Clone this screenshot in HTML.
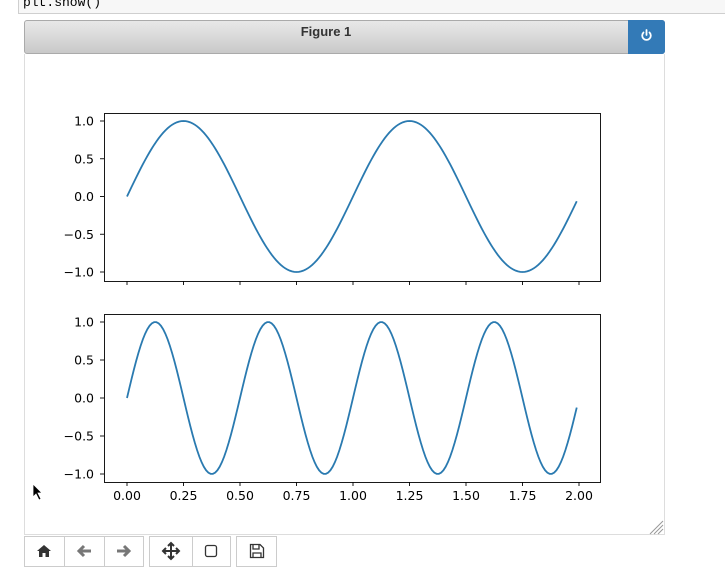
<!DOCTYPE html>
<html><head><style>
body{margin:0;width:725px;height:577px;background:#fff;overflow:hidden;position:relative;font-family:"Liberation Sans",sans-serif}
.code{position:absolute;left:18px;top:-2px;width:720px;height:14px;background:#f7f7f7;border:1px solid #cfcfcf;font-family:"Liberation Mono",monospace;font-size:13px;line-height:8px;padding-left:4px;color:#000;overflow:hidden}
.hdr{position:absolute;left:24px;top:20px;width:639px;height:32px;border:1px solid #aaa;border-radius:3px;background:linear-gradient(#e8e8e8,#c9c9c9);font-weight:bold;font-size:13px;line-height:22px;color:#333}
.ttl{position:absolute;left:0;width:602px;text-align:center;top:0}
.pw{position:absolute;right:-1px;top:-1px;width:37px;height:34px;background:#337ab7;border-radius:0 3px 3px 0}
.canvas{position:absolute;left:24px;top:54px;width:639px;height:480px;border:1px solid #ddd;border-top:none}
.btn{position:absolute;top:536px;height:31px;border:1px solid #ccc;background:#fff;box-sizing:border-box}
</style></head><body>
<div class="code">plt.show()</div>
<div class="hdr"><div class="ttl">Figure 1</div><div class="pw"><svg width="37" height="34" viewBox="0 0 37 34"><path d="M15.5 12.5a4.3 4.3 0 1 0 6 0" fill="none" stroke="#fff" stroke-width="1.8" stroke-linecap="round"/><line x1="18.5" y1="10" x2="18.5" y2="15" stroke="#fff" stroke-width="1.8" stroke-linecap="round"/></svg></div></div>
<div class="canvas"></div>
<svg style="position:absolute;left:0;top:0" width="725" height="577" font-family="DejaVu Sans, sans-serif" font-size="12.5">
<g id="g" stroke="#000" stroke-width="0.9" fill="none"></g>
<g id="t" fill="#000" stroke="none"></g>
<path d="M650 534 L663 521 M654 534 L663 525 M658 534 L663 529" stroke="#999" stroke-width="1"/>
</svg>
<div class="btn" style="left:24px;width:41px"></div>
<div class="btn" style="left:64px;width:41px"></div>
<div class="btn" style="left:104px;width:40px"></div>
<div class="btn" style="left:149px;width:44px"></div>
<div class="btn" style="left:192px;width:39px"></div>
<div class="btn" style="left:236px;width:41px"></div>
<svg style="position:absolute;left:0;top:536px" width="300" height="31">
<path d="M44 9 L37 15 L39 15 L39 21 L42.5 21 L42.5 17 L45.5 17 L45.5 21 L49 21 L49 15 L51 15 Z" fill="#333"/>
<path d="M91 15 H79 M84 10 L79 15 L84 20" stroke="#777" stroke-width="3" fill="none"/>
<path d="M117 15 H129 M124 10 L129 15 L124 20" stroke="#777" stroke-width="3" fill="none"/>
<path d="M171 7 V23 M163 15 H179 M168 10 L171 7 L174 10 M168 20 L171 23 L174 20 M166 12 L163 15 L166 18 M176 12 L179 15 L176 18" stroke="#333" stroke-width="2" fill="none"/>
<rect x="205.5" y="9.5" width="11" height="11" rx="2" fill="none" stroke="#333" stroke-width="1.3"/>
<path d="M250.5 8.5 H260 L263.5 12 V21.5 H250.5 Z M253 8.5 V13 H259 V8.5 M253 21.5 V17 H261 V21.5" fill="none" stroke="#333" stroke-width="1.3"/>
</svg>
<svg style="position:absolute;left:32px;top:483px" width="14" height="20"><path d="M1 1 L1 14 L4 11 L7 17 L9 16 L6 10 L10 10 Z" fill="#000" stroke="#fff" stroke-width="0.8"/></svg>
<script>
var ns="http://www.w3.org/2000/svg",g=document.getElementById('g'),t=document.getElementById('t');
function el(p,n,a){var e=document.createElementNS(ns,n);for(var k in a)e.setAttribute(k,a[k]);p.appendChild(e);return e}
function X(v){return 127+v*226}
[[113,281,2,121,272,1],[314,482,4,322,474,1]].forEach(function(ax,i){
 var top=ax[0],bot=ax[1],y1=ax[3],ym=ax[4];
 el(g,'rect',{x:104.5,y:top+.5,width:496,height:bot-top});
 function Y(v){return (y1+ym)/2-v*(ym-y1)/2}
 var d='';for(var k=0;k<=199;k++){var x=k/100;d+=(k?'L':'M')+X(x).toFixed(2)+' '+Y(Math.sin(ax[2]*Math.PI*x)).toFixed(2)}
 el(g,'path',{d:d,stroke:'#2a7ab0','stroke-width':1.8});
 [1,0.5,0,-0.5,-1].forEach(function(v){var y=Y(v);el(g,'line',{x1:100,x2:104,y1:y,y2:y});
  var tx=el(t,'text',{x:94,y:y+4.5,'text-anchor':'end'});tx.textContent=(v<0?'\u2212':'')+Math.abs(v).toFixed(1)});
 for(var j=0;j<=8;j++){var x=X(j*0.25);el(g,'line',{x1:x,x2:x,y1:bot,y2:bot+4});
  if(i==1){var tx=el(t,'text',{x:x,y:bot+18,'text-anchor':'middle'});tx.textContent=(j*0.25).toFixed(2)}}
});
</script>
</body></html>
